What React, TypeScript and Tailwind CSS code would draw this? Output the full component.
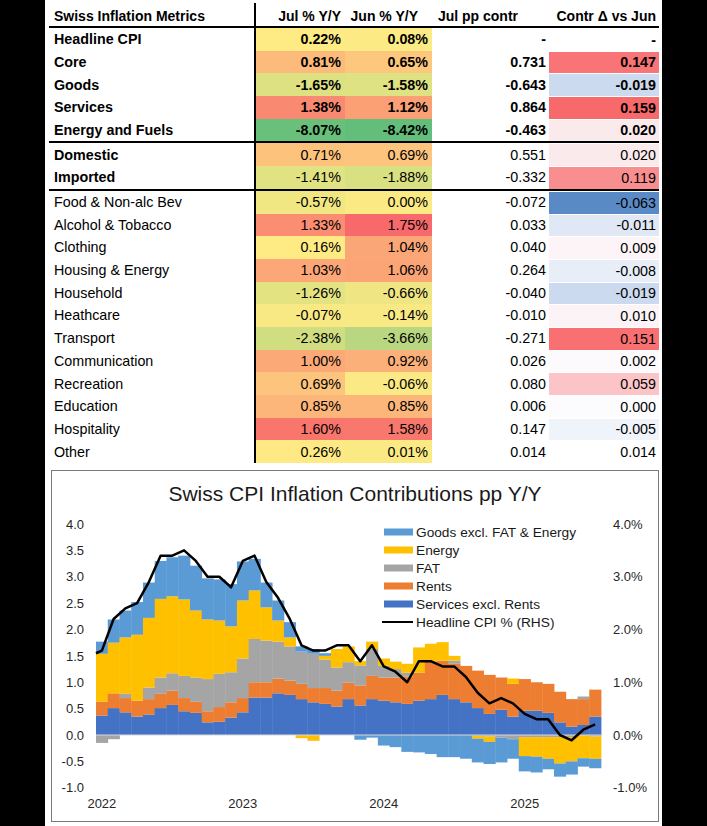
import React from "react";

type Row = { label: string; jul: number; jun: number; pp: string; d: number | null; fill4?: boolean };

const top: Row[] = [
  { label: "Headline CPI", jul: 0.22, jun: 0.08, pp: "-", d: null },
  { label: "Core", jul: 0.81, jun: 0.65, pp: "0.731", d: 0.147 },
  { label: "Goods", jul: -1.65, jun: -1.58, pp: "-0.643", d: -0.019 },
  { label: "Services", jul: 1.38, jun: 1.12, pp: "0.864", d: 0.159 },
  { label: "Energy and Fuels", jul: -8.07, jun: -8.42, pp: "-0.463", d: 0.02 },
];
const mid: Row[] = [
  { label: "Domestic", jul: 0.71, jun: 0.69, pp: "0.551", d: 0.02 },
  { label: "Imported", jul: -1.41, jun: -1.88, pp: "-0.332", d: 0.119 },
];
const cats: Row[] = [
  { label: "Food & Non-alc Bev", jul: -0.57, jun: 0.0, pp: "-0.072", d: -0.063 },
  { label: "Alcohol & Tobacco", jul: 1.33, jun: 1.75, pp: "0.033", d: -0.011 },
  { label: "Clothing", jul: 0.16, jun: 1.04, pp: "0.040", d: 0.009 },
  { label: "Housing & Energy", jul: 1.03, jun: 1.06, pp: "0.264", d: -0.008 },
  { label: "Household", jul: -1.26, jun: -0.66, pp: "-0.040", d: -0.019 },
  { label: "Heathcare", jul: -0.07, jun: -0.14, pp: "-0.010", d: 0.01 },
  { label: "Transport", jul: -2.38, jun: -3.66, pp: "-0.271", d: 0.151 },
  { label: "Communication", jul: 1.0, jun: 0.92, pp: "0.026", d: 0.002 },
  { label: "Recreation", jul: 0.69, jun: -0.06, pp: "0.080", d: 0.059 },
  { label: "Education", jul: 0.85, jun: 0.85, pp: "0.006", d: 0.0 },
  { label: "Hospitality", jul: 1.6, jun: 1.58, pp: "0.147", d: -0.005 },
  { label: "Other", jul: 0.26, jun: 0.01, pp: "0.014", d: 0.014, fill4: false },
];

type RGB = [number, number, number];
const mix = (a: RGB, b: RGB, t: number) => {
  const c = a.map((x, i) => Math.round(x + (b[i] - x) * Math.max(0, Math.min(1, t))));
  return `rgb(${c[0]},${c[1]},${c[2]})`;
};
const YEL: RGB = [255, 235, 132];
const RED: RGB = [248, 105, 107];
const GRN: RGB = [99, 190, 123];
const WHT: RGB = [252, 252, 255];
const BLU: RGB = [90, 138, 198];

const heat = (v: number) => {
  const m = 0.24;
  if (v >= m) return mix(YEL, RED, (v - m) / (1.75 - m));
  return mix(YEL, GRN, (m - v) / (m + 8.42));
};
const heat4 = (v: number) => {
  if (v >= 0) return mix(WHT, RED, v / 0.159);
  return mix(WHT, BLU, -v / 0.063);
};

const pct = (v: number) => v.toFixed(2) + "%";

function TableRow({ r, bold, boldLabel }: { r: Row; bold: boolean; boldLabel: boolean }) {
  const w = bold ? "font-bold" : "font-normal";
  return (
    <div className="flex h-[22.7px] text-[14.3px] leading-none">
      <div className={`w-[207px] border-r-2 border-black pl-[5px] flex items-center ${boldLabel ? "font-bold" : ""}`}>
        {r.label}
      </div>
      <div className={`w-[89px] flex items-center justify-end pr-[4px] ${w}`} style={{ backgroundColor: heat(r.jul) }}>
        {pct(r.jul)}
      </div>
      <div className={`w-[87px] flex items-center justify-end pr-[4px] ${w}`} style={{ backgroundColor: heat(r.jun) }}>
        {pct(r.jun)}
      </div>
      <div className={`w-[117px] flex items-center justify-end pr-[3px] ${w}`}>{r.pp}</div>
      <div
        className={`w-[110px] flex items-center justify-end pr-[3px] border-t border-white ${w}`}
        style={r.d !== null && r.fill4 !== false ? { backgroundColor: heat4(r.d) } : undefined}
      >
        {r.d === null ? "-" : r.d.toFixed(3)}
      </div>
    </div>
  );
}

const svc = [.37,.51,.43,.35,.39,.51,.57,.45,.42,.24,.25,.33,.43,.71,.71,.79,.76,.68,.62,.59,.54,.68,.56,.68,.65,.62,.59,.65,.68,.76,.68,.62,.51,.40,.48,.35,.46,.46,.42,.24,.16,.19,.35];
const rent = [.26,.28,.27,.30,.29,.27,.27,.25,.21,.21,.28,.29,.27,.29,.29,.28,.27,.29,.27,.30,.30,.31,.38,.44,.44,.47,.52,.53,.71,.65,.67,.69,.71,.74,.61,.62,.60,.54,.55,.58,.52,.49,.51];
const fat = [-.15,-.08,.08,0,.22,.31,.33,.42,.46,.61,.63,.57,.75,.82,.79,.70,.65,.61,.65,.54,.44,.39,.38,.51,.22,.16,.07,0,0,0,.06,0,-.02,-.03,-.05,-.08,-.04,-.04,-.04,-.04,-.04,.05,-.03];
const en = [.91,.96,1.07,1.25,1.32,1.49,1.46,1.45,1.27,1.13,1.01,.87,1.10,.92,.63,.40,.17,-.06,-.11,.07,.35,.30,.08,.14,.14,.14,.17,.48,.34,.35,.09,0,-.05,-.10,0,.10,-.36,-.37,-.41,-.50,-.46,-.44,-.42];
const goods = [.23,.44,.51,.62,.67,.72,.74,.83,.85,.78,.78,.80,.74,.60,.47,.38,.29,.10,.09,.05,0,0,-.09,-.05,-.20,-.23,-.32,-.33,-.36,-.42,-.42,-.45,-.45,-.42,-.47,-.37,-.29,-.30,-.20,-.25,-.25,-.16,-.18];
const cpi = [1.6,2.2,2.4,2.5,2.9,3.4,3.4,3.5,3.3,3.0,3.0,2.8,3.3,3.4,2.9,2.6,2.2,1.7,1.6,1.6,1.7,1.7,1.4,1.7,1.3,1.2,1.0,1.4,1.4,1.3,1.3,1.1,0.8,0.6,0.7,0.6,0.4,0.3,0.3,0.0,-0.1,0.1,0.2];

const SERIES: { data: number[]; color: string }[] = [
  { data: svc, color: "#4472C4" },
  { data: rent, color: "#ED7D31" },
  { data: fat, color: "#A5A5A5" },
  { data: en, color: "#FFC000" },
  { data: goods, color: "#5B9BD5" },
];

const K = 52.75;
const Y = (v: number) => 224 - v * K;
const X0 = 44;
const BW = 11.744;

function Chart() {
  const rects: React.ReactElement[] = [];
  for (let i = 0; i < cpi.length; i++) {
    let pos = 0;
    let neg = 0;
    const x = X0 + i * BW;
    SERIES.forEach((s, si) => {
      const v = s.data[i];
      if (v > 0) {
        rects.push(<rect key={`${i}-${si}`} x={x} y={Y(pos + v)} width={BW + 0.4} height={v * K} fill={s.color} />);
        pos += v;
      } else if (v < 0) {
        rects.push(<rect key={`${i}-${si}`} x={x} y={Y(neg)} width={BW + 0.4} height={-v * K} fill={s.color} />);
        neg += v;
      }
    });
  }
  const pts = [`${X0},${Y(1.55)}`].concat(cpi.map((v, i) => `${X0 + (i + 0.5) * BW},${Y(v)}`)).join(" ");
  const legend = [
    { t: "Goods excl. FAT & Energy", c: "#5B9BD5" },
    { t: "Energy", c: "#FFC000" },
    { t: "FAT", c: "#A5A5A5" },
    { t: "Rents", c: "#ED7D31" },
    { t: "Services excl. Rents", c: "#4472C4" },
  ];
  return (
    <svg width="606" height="310" className="block" fontFamily="'Liberation Sans', Arial, sans-serif">
      {[4, 3.5, 3, 2.5, 2, 1.5, 1, 0.5, 0, -0.5, -1].map((v) => (
        <text key={v} x={32} y={Y(v) + 4.7} fontSize="13" textAnchor="end" fill="#262626">
          {v.toFixed(1)}
        </text>
      ))}
      {[4, 3, 2, 1, 0, -1].map((v) => (
        <text key={v} x={561} y={Y(v) + 4.7} fontSize="13" fill="#262626">
          {v.toFixed(1) + "%"}
        </text>
      ))}
      {rects}
      <line x1={X0} x2={X0 + 43 * BW} y1={224} y2={224} stroke="#d9d9d9" strokeWidth="1" />
      <polyline points={pts} fill="none" stroke="#000" strokeWidth="2.5" strokeLinejoin="round" />
      {["2022", "2023", "2024", "2025"].map((t, k) => (
        <text key={t} x={X0 + (k * 12 + 0.5) * BW} y={296.7} fontSize="13" textAnchor="middle" fill="#262626">
          {t}
        </text>
      ))}
      {legend.map((l, k) => (
        <g key={l.t}>
          <rect x={332} y={21 + k * 18 - 3.5} width={29} height={7} fill={l.c} />
          <text x={364} y={21 + k * 18 + 4.9} fontSize="13.7" fill="#1a1a1a">
            {l.t}
          </text>
        </g>
      ))}
      <line x1={330} x2={361} y1={111} y2={111} stroke="#000" strokeWidth="2" />
      <text x={364} y={111 + 4.9} fontSize="13.7" fill="#1a1a1a">
        Headline CPI % (RHS)
      </text>
    </svg>
  );
}

export default function App() {
  return (
    <div className="h-[826px] w-full bg-black flex justify-center overflow-hidden">
      <div className="w-[617px] h-full bg-white text-black font-['Liberation_Sans',Arial,sans-serif]">
        <div className="ml-[4px] w-[610px] pt-[3px]">
          <div className="flex h-[25px] border-b-2 border-black text-[14px] font-bold leading-none">
            <div className="w-[207px] border-r-2 border-black pl-[5px] flex items-center pt-[2px]">Swiss Inflation Metrics</div>
            <div className="w-[89px] flex items-center justify-end pr-[4px] pt-[2px]">Jul % Y/Y</div>
            <div className="w-[87px] flex items-center justify-end pr-[14px] pt-[2px]">Jun % Y/Y</div>
            <div className="w-[117px] flex items-center justify-end pr-[31px] pt-[2px]">Jul pp contr</div>
            <div className="w-[110px] flex items-center justify-end pr-[3px] pt-[2px]">Contr Δ vs Jun</div>
          </div>
          {top.map((r) => (
            <TableRow key={r.label} r={r} bold boldLabel />
          ))}
          <div className="h-[2px] bg-black" />
          {mid.map((r) => (
            <TableRow key={r.label} r={r} bold={false} boldLabel />
          ))}
          <div className="h-[2px] bg-black" />
          {cats.map((r) => (
            <TableRow key={r.label} r={r} bold={false} boldLabel={false} />
          ))}
        </div>
        <div className="ml-[6px] mt-[7px] w-[608px] h-[352px] border border-[#7a7a7a]">
          <div className="h-[40px] pt-[11px] text-center text-[21px] leading-[24px] text-[#1a1a1a]">
            Swiss CPI Inflation Contributions pp Y/Y
          </div>
          <Chart />
        </div>
      </div>
    </div>
  );
}
